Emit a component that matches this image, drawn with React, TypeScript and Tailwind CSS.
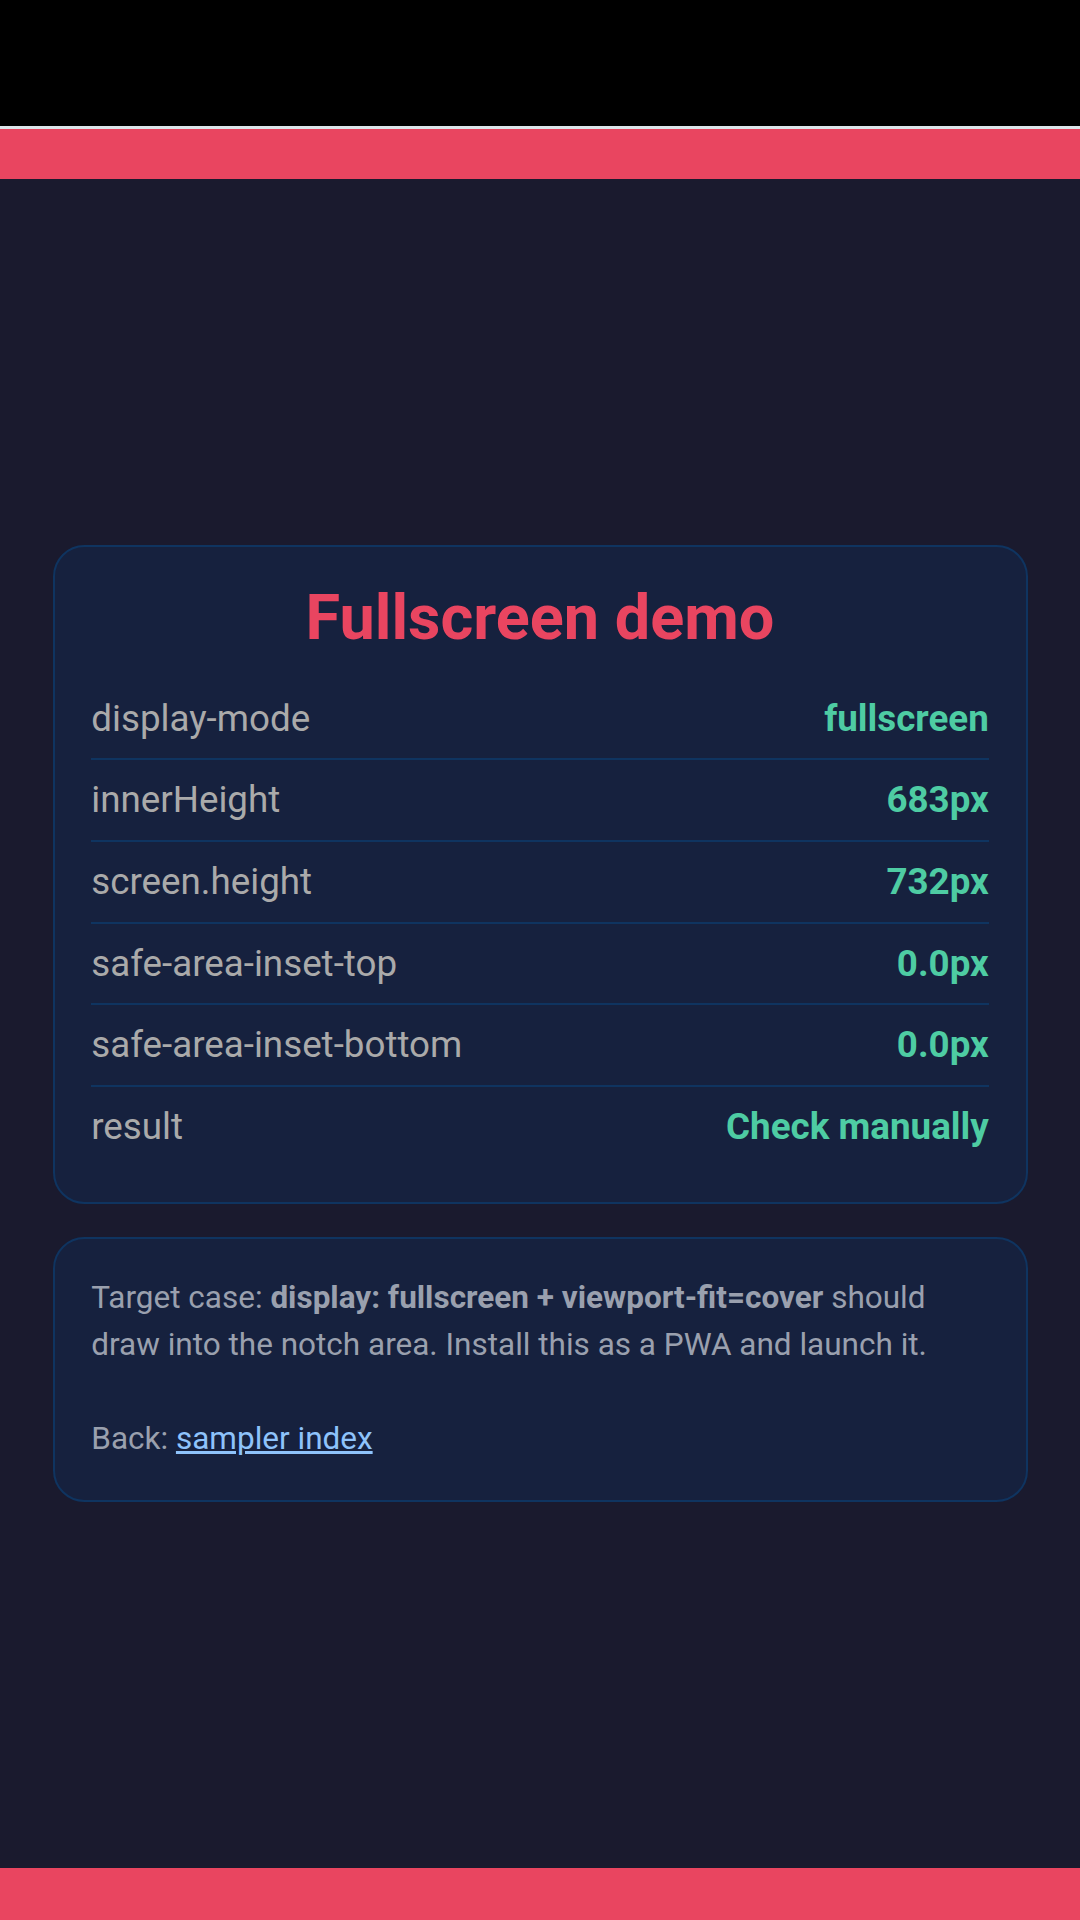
import React from "react";

const rows: { label: string; value: string }[] = [
  { label: "display-mode", value: "fullscreen" },
  { label: "innerHeight", value: "683px" },
  { label: "screen.height", value: "732px" },
  { label: "safe-area-inset-top", value: "0.0px" },
  { label: "safe-area-inset-bottom", value: "0.0px" },
  { label: "result", value: "Check manually" },
];

export default function App() {
  return (
    <div className="flex h-[1920px] w-full flex-col bg-[#1a1a2e] font-[family-name:Roboto,'Noto_Sans',sans-serif]">
      <div className="h-[126px] shrink-0 bg-black" />
      <div className="h-[3px] shrink-0 bg-[#dde4ea]" />
      <div className="h-[50px] shrink-0 bg-[#e94560]" />
      <main className="flex flex-1 flex-col justify-center px-[52.5px]">
        <section className="rounded-[31.5px] border-2 border-[#0f3460] bg-[#16213e] px-[36.75px] pt-[31.5px] pb-[35px]">
          <h1 className="mb-[21px] text-center text-[63px] leading-[78.5px] font-bold text-[#e94560]">
            Fullscreen demo
          </h1>
          <div className="flex flex-col">
            {rows.map((r, i) => (
              <div
                key={r.label}
                className={
                  i < rows.length - 1
                    ? "flex h-[81.7px] items-center justify-between border-b-2 border-[#0f3460] text-[36.75px]"
                    : "flex h-[79.7px] items-center justify-between text-[36.75px]"
                }
              >
                <span className="text-[#aaaaaa]">{r.label}</span>
                <span className="font-bold text-[#4ecca3]">{r.value}</span>
              </div>
            ))}
          </div>
        </section>
        <section className="mt-[33px] rounded-[31.5px] border-2 border-[#0f3460] bg-[#16213e] px-[36.75px] pt-[35px] pb-[38px] text-[31.5px] leading-[47px] text-[#9aa0ae]">
          <p>
            Target case: <b className="font-bold">display: fullscreen + viewport-fit=cover</b> should draw into the
            notch area. Install this as a PWA and launch it.
            <br />
            <br />
            Back:{" "}
            <a href="#" className="text-[#8ec3fb] underline">
              sampler index
            </a>
          </p>
        </section>
      </main>
      <div className="h-[52px] shrink-0 bg-[#e94560]" />
    </div>
  );
}
